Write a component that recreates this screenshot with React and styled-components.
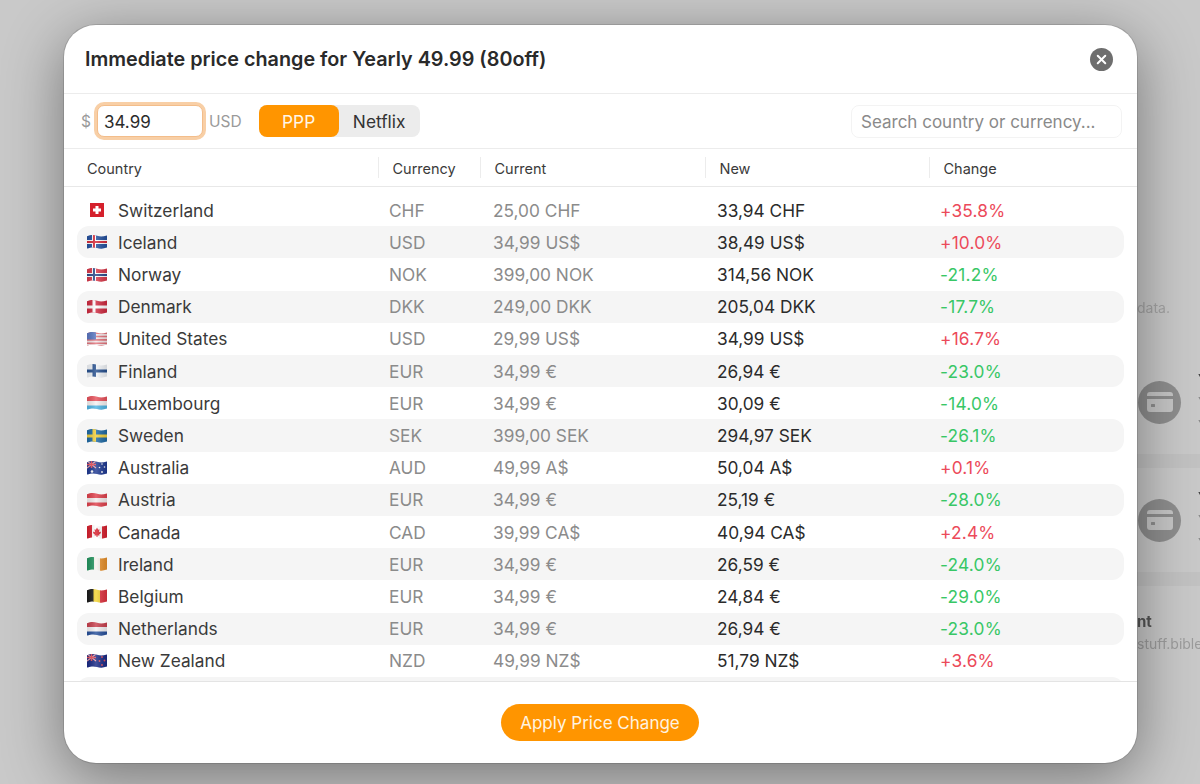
import React from "react";
import styled, { createGlobalStyle } from "styled-components";
import { X } from "lucide-react";

const rows = [
  ["ch", "Switzerland", "CHF", "25,00 CHF", "33,94 CHF", "+35.8%"],
  ["is", "Iceland", "USD", "34,99 US$", "38,49 US$", "+10.0%"],
  ["no", "Norway", "NOK", "399,00 NOK", "314,56 NOK", "-21.2%"],
  ["dk", "Denmark", "DKK", "249,00 DKK", "205,04 DKK", "-17.7%"],
  ["us", "United States", "USD", "29,99 US$", "34,99 US$", "+16.7%"],
  ["fi", "Finland", "EUR", "34,99 €", "26,94 €", "-23.0%"],
  ["lu", "Luxembourg", "EUR", "34,99 €", "30,09 €", "-14.0%"],
  ["se", "Sweden", "SEK", "399,00 SEK", "294,97 SEK", "-26.1%"],
  ["au", "Australia", "AUD", "49,99 A$", "50,04 A$", "+0.1%"],
  ["at", "Austria", "EUR", "34,99 €", "25,19 €", "-28.0%"],
  ["ca", "Canada", "CAD", "39,99 CA$", "40,94 CA$", "+2.4%"],
  ["ie", "Ireland", "EUR", "34,99 €", "26,59 €", "-24.0%"],
  ["be", "Belgium", "EUR", "34,99 €", "24,84 €", "-29.0%"],
  ["nl", "Netherlands", "EUR", "34,99 €", "26,94 €", "-23.0%"],
  ["nz", "New Zealand", "NZD", "49,99 NZ$", "51,79 NZ$", "+3.6%"],
];

const flags = {
  ch: (
    <>
      <rect x="3" width="14" height="14" fill="#d5202c" />
      <path d="M8.5 3h3v2.500H14v3h-2.500V11h-3V8.500H6v-3h2.500z" fill="#fff" />
    </>
  ),
  is: (
    <>
      <rect width="20" height="14" fill="#24509e" />
      <path d="M5 0h4v5h11v4H9v5H5V9H0V5h5z" fill="#fff" />
      <path d="M6 0h2v6h12v2H8v6H6V8H0V6h6z" fill="#d72b3a" />
    </>
  ),
  no: (
    <>
      <rect width="20" height="14" fill="#d9384a" />
      <path d="M5 0h4v5h11v4H9v5H5V9H0V5h5z" fill="#fff" />
      <path d="M6 0h2v6h12v2H8v6H6V8H0V6h6z" fill="#2a4a8c" />
    </>
  ),
  dk: (
    <>
      <rect width="20" height="14" fill="#cf2a40" />
      <path d="M5.500 0h3v5.500H20v3H8.500V14h-3V8.500H0v-3h5.500z" fill="#fff" />
    </>
  ),
  us: (
    <>
      <rect width="20" height="14" fill="#e4747c" />
      <path d="M0 2h20v1.700H0zM0 5.300h20V7H0zM0 8.700h20v1.700H0zM0 12h20v1.200H0z" fill="#f4e8ea" />
      <rect width="9" height="7.500" fill="#5a77c2" />
    </>
  ),
  fi: (
    <>
      <rect width="20" height="14" fill="#f1f4f8" />
      <path d="M5.500 0h3.500v5.500h11v3H9V14H5.500V8.500H0v-3h5.500z" fill="#27508f" />
    </>
  ),
  lu: (
    <>
      <rect width="20" height="14" fill="#f6f2f2" />
      <rect width="20" height="5" fill="#e8525c" />
      <rect y="9.500" width="20" height="5" fill="#4fb5e4" />
    </>
  ),
  se: (
    <>
      <rect width="20" height="14" fill="#1f6aa5" />
      <path d="M5.500 0h3.500v5.500h11v3H9V14H5.500V8.500H0v-3h5.500z" fill="#f2cf3a" />
    </>
  ),
  au: (
    <>
      <rect width="20" height="14" fill="#1f3a93" />
      <path d="M0 0l9 7M9 0L0 7" stroke="#f0a0a8" strokeWidth="1.200" />
      <path d="M4.500 0v7M0 3.500h9" stroke="#e8505c" strokeWidth="1.500" />
      <circle cx="5" cy="10.500" r="1.300" fill="#fff" />
      <circle cx="15" cy="3" r=".8" fill="#fff" />
      <circle cx="12.500" cy="6.500" r=".8" fill="#fff" />
      <circle cx="17.500" cy="6" r=".8" fill="#fff" />
      <circle cx="15" cy="11" r=".9" fill="#fff" />
    </>
  ),
  at: (
    <>
      <rect width="20" height="14" fill="#f5eeee" />
      <rect width="20" height="5" fill="#e0414c" />
      <rect y="9.500" width="20" height="5" fill="#e0414c" />
    </>
  ),
  ca: (
    <>
      <rect width="20" height="14" fill="#fff" />
      <rect width="5" height="14" fill="#d8202e" />
      <rect x="15" width="5" height="14" fill="#d8202e" />
      <path d="M10 2.500l1.200 2.300 1.300-.6-.5 3 1.500-.7.500 1.400-1.800 1.500.3 1h-2v1.500h-1V10.400h-2l.3-1-1.800-1.500.5-1.400 1.500.7-.5-3 1.300.6z" fill="#d8202e" />
    </>
  ),
  ie: (
    <>
      <rect width="20" height="14" fill="#f5f3ec" />
      <rect width="7" height="14" fill="#23955f" />
      <rect x="13" width="7" height="14" fill="#e8912c" />
    </>
  ),
  be: (
    <>
      <rect width="7" height="14" fill="#1b1b1b" />
      <rect x="6.500" width="7" height="14" fill="#f4d432" />
      <rect x="13" width="7" height="14" fill="#e0333f" />
    </>
  ),
  nl: (
    <>
      <rect width="20" height="14" fill="#f4f2f4" />
      <rect width="20" height="5" fill="#c8404e" />
      <rect y="9.500" width="20" height="5" fill="#27509b" />
    </>
  ),
  nz: (
    <>
      <rect width="20" height="14" fill="#1a2a86" />
      <path d="M0 0l9 7M9 0L0 7" stroke="#f0a0a8" strokeWidth="1.200" />
      <path d="M4.500 0v7M0 3.500h9" stroke="#e8505c" strokeWidth="1.500" />
      <circle cx="15" cy="3" r=".9" fill="#e8505c" />
      <circle cx="12.500" cy="7" r=".9" fill="#e8505c" />
      <circle cx="17.500" cy="6.500" r=".9" fill="#e8505c" />
      <circle cx="15" cy="11" r=".9" fill="#e8505c" />
    </>
  ),
};

// shared wave outline and sheen so the flags look like the emoji ones
const FlagDefs = () => (
  <svg width="0" height="0" style={{ position: "absolute" }}>
    <defs>
      <clipPath id="flag-wave">
        <path d="M0 1.200C4 -.4 7 -.2 10 .8S16 1.800 20 .4V12.600C16 14 13 13.900 10 13S4 12.200 0 13.600z" />
      </clipPath>
      <linearGradient id="flag-sheen" x1="0" x2="1" y1="0" y2="0">
        <stop offset="0" stopColor="#000" stopOpacity=".1" />
        <stop offset=".45" stopColor="#fff" stopOpacity=".18" />
        <stop offset="1" stopColor="#000" stopOpacity=".12" />
      </linearGradient>
    </defs>
  </svg>
);

const Flag = ({ code }) => (
  <FlagIcon viewBox="0 0 20 14" width="20" height="14">
    <g clipPath={code === "ch" ? undefined : "url(#flag-wave)"}>
      {flags[code]}
      {code !== "ch" && <rect width="20" height="14" fill="url(#flag-sheen)" />}
    </g>
  </FlagIcon>
);

const CardGlyph = () => (
  <svg viewBox="0 0 26 20" width="26" height="20">
    <rect width="26" height="20" rx="3" fill="#c6c6c6" />
    <rect y="4" width="26" height="3" fill="#8e8e8e" />
    <rect x="4" y="12" width="4" height="3" rx=".5" fill="#8e8e8e" />
  </svg>
);

const App = () => {
  return (
    <Page>
      <GlobalStyle />
      <FlagDefs />
      <Behind>
        <Note>data.</Note>
        <Plan>
          <PlanIcon>
            <CardGlyph />
          </PlanIcon>
          <PlanText>
            <b>Yearly</b>
            <span>Yearly</span>
            <span>Yearly</span>
          </PlanText>
        </Plan>
        <Plan>
          <PlanIcon>
            <CardGlyph />
          </PlanIcon>
          <PlanText>
            <b>Yearly</b>
            <span>Yearly</span>
            <span>Yearly</span>
          </PlanText>
        </Plan>
        <Account>
          <b>nt</b>
          <span>stuff.bible</span>
        </Account>
      </Behind>

      <Modal>
        <Header>
          <Title>Immediate price change for Yearly 49.99 (80off)</Title>
          <CloseButton>
            <X size={15} strokeWidth={3.2} />
          </CloseButton>
        </Header>

        <Toolbar>
          <Muted>$</Muted>
          <PriceInput value="34.99" readOnly />
          <Muted>USD</Muted>
          <Segments>
            <Segment $active>PPP</Segment>
            <Segment>Netflix</Segment>
          </Segments>
          <Search placeholder="Search country or currency..." />
        </Toolbar>

        <TableHead>
          <HeadCell>Country</HeadCell>
          <HeadCell $line>Currency</HeadCell>
          <HeadCell $line>Current</HeadCell>
          <HeadCell $line>New</HeadCell>
          <HeadCell $line>Change</HeadCell>
        </TableHead>

        <TableBody>
          {rows.map(([code, name, currency, current, next, change], index) => (
            <Row key={code} $striped={index % 2 === 1}>
              <CountryCell>
                <Flag code={code} />
                {name}
              </CountryCell>
              <GreyCell>{currency}</GreyCell>
              <GreyCell>{current}</GreyCell>
              <div>{next}</div>
              <Change $up={change[0] === "+"}>{change}</Change>
            </Row>
          ))}
          <Row $striped />
        </TableBody>

        <Footer>
          <ApplyButton>Apply Price Change</ApplyButton>
        </Footer>
      </Modal>
    </Page>
  );
};

const GlobalStyle = createGlobalStyle`
  html, body {
    margin: 0;
    height: 100%;
    background: #c8c8c8;
  }
  * {
    box-sizing: border-box;
  }
`;

const Page = styled.div`
  position: relative;
  width: 1200px;
  height: 784px;
  overflow: hidden;
  background: #c9c9c9;
  font-family: Inter, "Liberation Sans", sans-serif;
  color: #2b2b2b;
`;

const Behind = styled.div`
  display: flex;
  flex-direction: column;
  padding: 299px 0 0 1137px;
  width: 1500px;
  filter: blur(0.6px);
`;

const Note = styled.div`
  font-size: 14px;
  line-height: 17px;
  color: #a4a4a4;
  margin-bottom: 34px;
`;

const Plan = styled.div`
  display: flex;
  align-items: center;
  gap: 17px;
  height: 118px;
  padding-left: 1px;
  border-bottom: 14px solid #c2c2c2;
`;

const PlanIcon = styled.div`
  width: 43px;
  height: 43px;
  border-radius: 50%;
  background: #8e8e8e;
  display: flex;
  align-items: center;
  justify-content: center;
  flex: none;
`;

const PlanText = styled.div`
  display: flex;
  flex-direction: column;
  gap: 6px;
  font-size: 14px;
  color: #8a8a8a;

  b {
    color: #444;
  }
`;

const Account = styled.div`
  display: flex;
  flex-direction: column;
  gap: 4px;
  margin-top: 26px;
  font-size: 14px;
  color: #9c9c9c;

  b {
    font-size: 15px;
    color: #555;
  }
`;

const Modal = styled.div`
  position: absolute;
  top: 25px;
  left: 64px;
  width: 1073px;
  height: 738px;
  display: flex;
  flex-direction: column;
  background: #fff;
  border-radius: 32px;
  overflow: hidden;
  box-shadow: 0 14px 60px rgba(0, 0, 0, 0.42), 0 0 0 1px rgba(0, 0, 0, 0.12);
`;

const Header = styled.div`
  display: flex;
  align-items: center;
  justify-content: space-between;
  height: 69px;
  padding: 0 24px 0 21px;
  border-bottom: 1px solid #ececec;
  flex: none;
`;

const Title = styled.div`
  font-size: 19.800px;
  font-weight: 600;
  color: #2a2a2a;
`;

const CloseButton = styled.div`
  width: 23px;
  height: 23px;
  border-radius: 50%;
  background: #6e6e6e;
  color: #fff;
  display: flex;
  align-items: center;
  justify-content: center;
`;

const Toolbar = styled.div`
  display: flex;
  align-items: center;
  height: 55px;
  padding: 0 15px 0 17px;
  border-bottom: 1px solid #ececec;
  flex: none;
`;

const Muted = styled.span`
  font-size: 15.500px;
  color: #9a9a9a;
  padding-top: 1px;
`;

const PriceInput = styled.input`
  width: 106px;
  height: 32px;
  margin: 0 6px;
  padding: 1px 6px 0;
  border: 1px solid #f3bd8a;
  border-radius: 7px;
  box-shadow: 0 0 0 3px #f8cfa6;
  outline: none;
  font: 17px Inter, "Liberation Sans", sans-serif;
  color: #2b2b2b;
`;

const Segments = styled.div`
  display: flex;
  margin-left: 17px;
  height: 32px;
  width: 161px;
  border-radius: 8px;
  background: #ececec;
`;

const Segment = styled.div`
  flex: ${(p) => (p.$active ? "0 0 80px" : "1")};
  display: flex;
  align-items: center;
  justify-content: center;
  padding-top: 1px;
  border-radius: 8px;
  font-size: 17.300px;
  background: ${(p) => (p.$active ? "#ff9500" : "transparent")};
  color: ${(p) => (p.$active ? "#fff6e8" : "#333")};
`;

const Search = styled.input`
  margin-left: auto;
  width: 271px;
  height: 33px;
  padding: 2px 8px 0 9px;
  border: 1px solid #f3f3f3;
  border-radius: 8px;
  outline: none;
  font: 17px Inter, "Liberation Sans", sans-serif;

  &::placeholder {
    color: #8a8a8a;
    opacity: 1;
  }
`;

const TableHead = styled.div`
  display: grid;
  grid-template-columns: 314px 102px 225px 224px 1fr;
  align-items: center;
  height: 38px;
  border-bottom: 1px solid #e8e8e8;
  flex: none;
`;

const HeadCell = styled.div`
  height: 21px;
  line-height: 23px;
  font-size: 14.500px;
  color: #3a3a3a;
  padding-left: ${(p) => (p.$line ? "13.500px" : "23px")};
  border-left: ${(p) => (p.$line ? "1px solid #ececec" : "none")};
`;

const TableBody = styled.div`
  flex: 1;
  min-height: 0;
  overflow: hidden;
  padding: 7.100px 13px 0;
`;

const Row = styled.div`
  display: grid;
  grid-template-columns: 312px 104px 224px 223px 1fr;
  align-items: center;
  height: 32.200px;
  font-size: 17.300px;
  color: #2b2b2b;
  border-radius: 12px;
  background: ${(p) => (p.$striped ? "#f5f5f5" : "transparent")};
`;

const CountryCell = styled.div`
  display: flex;
  align-items: center;
  gap: 11px;
  padding-left: 10px;
  color: #3a3a3a;
`;

const FlagIcon = styled.svg`
  flex: none;
`;

const GreyCell = styled.div`
  color: #8b8b8b;
`;

const Change = styled.div`
  color: ${(p) => (p.$up ? "#ec4a5a" : "#38c766")};
  letter-spacing: 0.2px;
`;

const Footer = styled.div`
  display: flex;
  align-items: center;
  justify-content: center;
  height: 82px;
  padding-right: 1px;
  border-top: 1px solid #e4e4e4;
  flex: none;
`;

const ApplyButton = styled.button`
  width: 198px;
  height: 37px;
  border: none;
  border-radius: 19px;
  background: #ff9500;
  color: #fff3e0;
  font: 17px Inter, "Liberation Sans", sans-serif;
`;

export default App;
